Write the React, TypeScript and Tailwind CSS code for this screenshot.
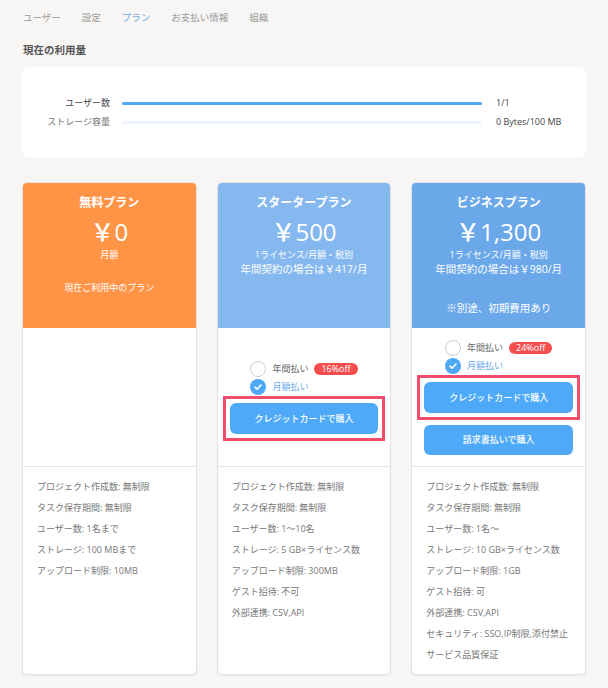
import React from "react";

interface Plan {
  key: string;
  name: string;
  price: string;
  head: string;
  sub?: string;
  yearly?: string;
  current?: string;
  note?: string;
  discount?: string;
  invoice?: boolean;
  features: string[];
}

const plans: Plan[] = [
  {
    key: "free",
    name: "無料プラン",
    price: "￥0",
    head: "bg-[#ff9447]",
    sub: "月額",
    current: "現在ご利用中のプラン",
    features: [
      "プロジェクト作成数: 無制限",
      "タスク保存期間: 無制限",
      "ユーザー数: 1名まで",
      "ストレージ: 100 MBまで",
      "アップロード制限: 10MB",
    ],
  },
  {
    key: "starter",
    name: "スタータープラン",
    price: "￥500",
    head: "bg-[#86b8f0]",
    sub: "1ライセンス/月額・税別",
    yearly: "年間契約の場合は￥417/月",
    discount: "16%off",
    features: [
      "プロジェクト作成数: 無制限",
      "タスク保存期間: 無制限",
      "ユーザー数: 1〜10名",
      "ストレージ: 5 GB×ライセンス数",
      "アップロード制限: 300MB",
      "ゲスト招待: 不可",
      "外部連携: CSV,API",
    ],
  },
  {
    key: "business",
    name: "ビジネスプラン",
    price: "￥1,300",
    head: "bg-[#6ba8ea]",
    sub: "1ライセンス/月額・税別",
    yearly: "年間契約の場合は￥980/月",
    note: "※別途、初期費用あり",
    discount: "24%off",
    invoice: true,
    features: [
      "プロジェクト作成数: 無制限",
      "タスク保存期間: 無制限",
      "ユーザー数: 1名〜",
      "ストレージ: 10 GB×ライセンス数",
      "アップロード制限: 1GB",
      "ゲスト招待: 可",
      "外部連携: CSV,API",
      "セキュリティ: SSO,IP制限,添付禁止",
      "サービス品質保証",
    ],
  },
];

function Radio({ checked }: { checked?: boolean }) {
  if (checked) {
    return (
      <span className="w-4 h-4 rounded-full bg-[#4ea8f5] flex items-center justify-center">
        <svg width="10" height="10" viewBox="0 0 10 10" fill="none">
          <path d="M2 5.2 L4.1 7.2 L8 3" stroke="white" strokeWidth="1.6" strokeLinecap="round" strokeLinejoin="round" />
        </svg>
      </span>
    );
  }
  return <span className="w-4 h-4 rounded-full bg-white border border-[#cfcfcf]" />;
}

function PlanCard({ plan }: { plan: Plan }) {
  const paid = plan.key !== "free";
  return (
    <div className="bg-white border border-[#e3e3e3] rounded-[5px] overflow-hidden shadow-[0_1px_2px_rgba(0,0,0,0.05)] flex flex-col">
      <div className={`${plan.head} h-[145px] flex flex-col items-center text-white pt-[11px]`}>
        <div className="text-[12px] leading-[18px] font-bold">{plan.name}</div>
        <div className="text-[24px] leading-[30px] font-medium mt-[5px]">{plan.price}</div>
        <div className="text-[9px] leading-[14px] mt-px">{plan.sub}</div>
        {plan.yearly && <div className="text-[10.5px] leading-[15px]">{plan.yearly}</div>}
        {plan.current && <div className="text-[9px] leading-[14px] mt-[19px]">{plan.current}</div>}
        {plan.note && <div className="text-[10.5px] leading-[16px] mt-[23px]">{plan.note}</div>}
      </div>

      <div className="h-[139px] border-b border-[#e5e5e5] px-3 flex flex-col justify-center">
        {paid && (
          <>
            <div className="self-center flex flex-col">
              <div className="h-[18px] flex items-center gap-[6px]">
                <Radio />
                <span className="text-[9px] text-[#666]">年間払い</span>
                <span className="bg-[#f44e4e] text-white text-[9px] leading-[12px] font-medium px-[7px] rounded-full">
                  {plan.discount}
                </span>
              </div>
              <div className="h-[18px] flex items-center gap-[6px]">
                <Radio checked />
                <span className="text-[9px] text-[#6ba8ea]">月額払い</span>
              </div>
            </div>
            <div className="relative mt-[7px]">
              <span className="absolute -inset-[7px] border-[3px] border-[#ef4d6b] pointer-events-none" />
              <button className="w-full h-[31px] rounded-md bg-[#4eaaf8] text-white text-[9px] font-medium">
                クレジットカードで購入
              </button>
            </div>
            {plan.invoice && (
              <button className="w-full h-[30px] mt-3 rounded-md bg-[#4eaaf8] text-white text-[9px] font-medium">
                請求書払いで購入
              </button>
            )}
          </>
        )}
      </div>

      <ul className="px-[14px] pt-[9px] pb-[9px] flex-1">
        {plan.features.map((f) => (
          <li key={f} className="text-[9px] leading-[21px] text-[#777]">{f}</li>
        ))}
      </ul>
    </div>
  );
}

export default function App() {
  const tabs = ["ユーザー", "設定", "プラン", "お支払い情報", "組織"];

  return (
    <div className="min-h-screen bg-[#f7f6f5] px-[22px] pb-4 font-['Open_Sans','Noto_Sans_CJK_JP',sans-serif]">
      <nav className="flex items-center gap-[21px] pt-[11px] pl-px">
        {tabs.map((t) => (
          <span
            key={t}
            className={`text-[9.5px] leading-[14px] ${t === "プラン" ? "text-[#6ba8ea]" : "text-[#9a9a9a]"}`}
          >
            {t}
          </span>
        ))}
      </nav>

      <h2 className="mt-[17px] text-[10.5px] leading-[16px] font-bold text-[#555] pl-px">現在の利用量</h2>

      <section className="mt-[9px] bg-white rounded-lg py-[28px] flex flex-col gap-[3px]">
        <div className="flex items-center h-4">
          <span className="w-[88px] text-right text-[9px] text-[#444]">ユーザー数</span>
          <div className="ml-3 flex-1 h-[3px] rounded-full bg-[#52a8f5]" />
          <span className="ml-[14px] w-[90px] text-[9px] text-[#444]">1/1</span>
        </div>
        <div className="flex items-center h-4">
          <span className="w-[88px] text-right text-[9px] text-[#777]">ストレージ容量</span>
          <div className="ml-3 flex-1 h-[3px] rounded-full bg-[#edf4fc]" />
          <span className="ml-[14px] w-[90px] text-[9px] text-[#444]">0 Bytes/100 MB</span>
        </div>
      </section>

      <div className="mt-6 grid grid-cols-3 gap-5">
        {plans.map((p) => (
          <PlanCard key={p.key} plan={p} />
        ))}
      </div>
    </div>
  );
}
